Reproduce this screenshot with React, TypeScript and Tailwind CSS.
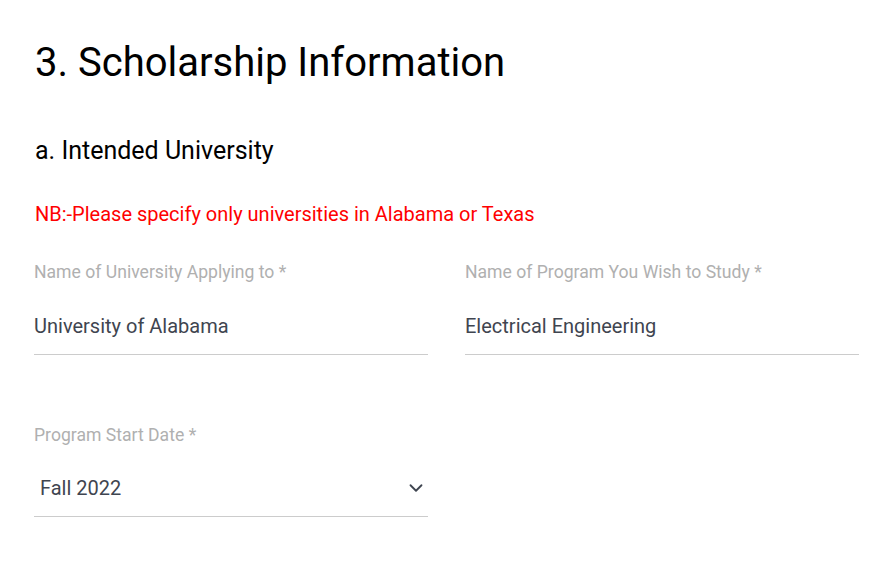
import { ChevronDown } from 'lucide-react';

function TextField({ label, value }: { label: string; value: string }) {
  return (
    <div className="flex flex-col">
      <label className="text-[17.6px] leading-[20px] text-[#b0b0b0]">{label}</label>
      <div className="mt-[32px] pb-[16px] border-b border-[#cccccc] text-[20px] leading-[24px] text-[#3f4550]">
        {value}
      </div>
    </div>
  );
}

export default function App() {
  return (
    <div className="min-h-screen bg-white font-['Roboto',sans-serif] pl-[34px] pr-[37px] pt-[40px]">
      <h1 className="text-[40px] leading-[46px] text-black ml-[1px]">3. Scholarship Information</h1>

      <h2 className="mt-[50px] text-[25px] leading-[30px] text-black ml-[1px]">a. Intended University</h2>

      <p className="mt-[36px] text-[20px] leading-[24px] text-[#ff0000] ml-[1px]">
        NB:-Please specify only universities in Alabama or Texas
      </p>

      {/* Row 1 */}
      <div className="mt-[36px] grid grid-cols-2 gap-x-[37px]">
        <TextField label="Name of University Applying to *" value="University of Alabama" />
        <TextField label="Name of Program You Wish to Study *" value="Electrical Engineering" />
      </div>

      {/* Row 2 */}
      <div className="mt-[70px] grid grid-cols-2 gap-x-[37px]">
        <div className="flex flex-col">
          <label className="text-[17.6px] leading-[20px] text-[#b0b0b0]">Program Start Date *</label>
          <div className="mt-[31px] pb-[16px] border-b border-[#cccccc] flex items-center justify-between pl-[6px] pr-[1px] text-[20px] leading-[24px] text-[#3f4550]">
            <span>Fall 2022</span>
            <ChevronDown className="w-[22px] h-[22px] text-[#3f4550]" strokeWidth={2} />
          </div>
        </div>
        <div />
      </div>
    </div>
  );
}
